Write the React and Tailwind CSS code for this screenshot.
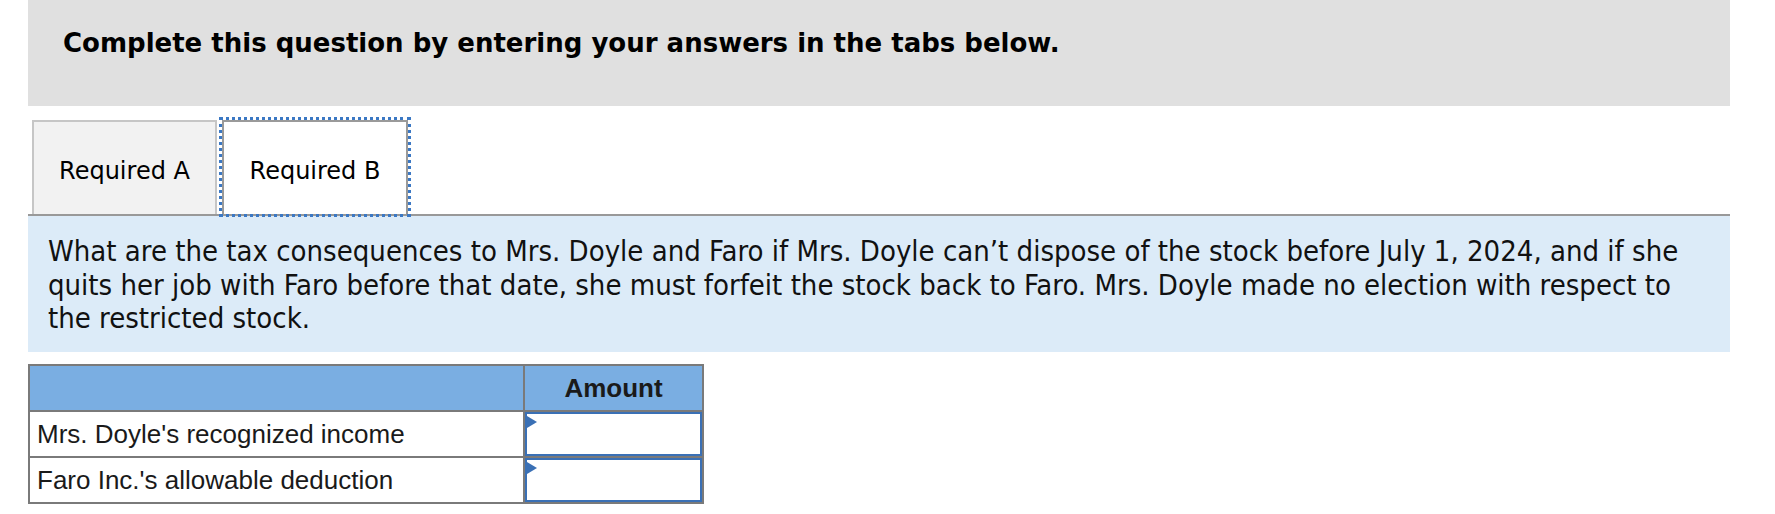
import React from "react";

function InputCell() {
  return (
    <td className="p-0 border-2 border-[#7a7a7a] h-[46px] align-top">
      <div className="relative h-[44px] w-full border-2 border-[#3a70b5] bg-white">
        <div className="absolute left-0 top-[2px] w-0 h-0 border-t-[6px] border-b-[6px] border-l-[10px] border-t-transparent border-b-transparent border-l-[#3a70b5]" />
      </div>
    </td>
  );
}

export default function App() {
  return (
    <div className="w-[1775px] h-[514px] bg-white overflow-hidden">
      <div className="ml-[28px] w-[1702px]">
        <div className="h-[106px] bg-[#e0e0e0] pl-[35px] pt-[27px]">
          <h1
            className="text-[26px] leading-[32px] font-bold text-black"
            style={{ fontFamily: '"DejaVu Sans", Verdana, sans-serif' }}
          >
            Complete this question by entering your answers in the tabs below.
          </h1>
        </div>

        <div
          className="h-[110px] pt-[14px] pl-[4px] flex items-stretch gap-[5px] border-b-2 border-[#999999] text-[24px] text-black"
          style={{ fontFamily: '"DejaVu Sans", Tahoma, sans-serif' }}
        >
          <div className="w-[185px] pt-[6px] bg-[#f2f2f2] border-2 border-b-0 border-[#c6c6c6] flex items-center justify-center">
            Required A
          </div>
          <div className="w-[186px] pt-[6px] bg-white border-2 border-b-0 border-[#9a9a9a] outline-[3px] outline-dotted outline-[#3b78c4] outline-offset-0 flex items-center justify-center">
            Required B
          </div>
        </div>

        <div
          className="h-[136px] bg-[#dcebf8] pl-[20px] pt-[19px] text-[29px] leading-[33.5px] text-[#111]"
          style={{ fontFamily: '"DejaVu Sans Condensed", "DejaVu Sans", Tahoma, sans-serif' }}
        >
          What are the tax consequences to Mrs. Doyle and Faro if Mrs. Doyle can’t dispose of the stock before July 1, 2024, and if she
          <br />
          quits her job with Faro before that date, she must forfeit the stock back to Faro. Mrs. Doyle made no election with respect to
          <br />
          the restricted stock.
        </div>

        <table
          className="mt-[12px] border-collapse border-2 border-[#7a7a7a] text-[26px] text-[#1a1a1a]"
          style={{ fontFamily: '"Liberation Sans", Arial, sans-serif' }}
        >
          <tbody>
            <tr className="bg-[#7aaee2]">
              <td className="w-[495px] h-[46px] border-2 border-[#7a7a7a]" />
              <td className="w-[179px] h-[46px] border-2 border-[#7a7a7a] text-center font-bold">
                Amount
              </td>
            </tr>
            <tr>
              <td className="h-[46px] border-2 border-[#7a7a7a] pl-[7px]">
                Mrs. Doyle's recognized income
              </td>
              <InputCell />
            </tr>
            <tr>
              <td className="h-[46px] border-2 border-[#7a7a7a] pl-[7px]">
                Faro Inc.'s allowable deduction
              </td>
              <InputCell />
            </tr>
          </tbody>
        </table>
      </div>
    </div>
  );
}
